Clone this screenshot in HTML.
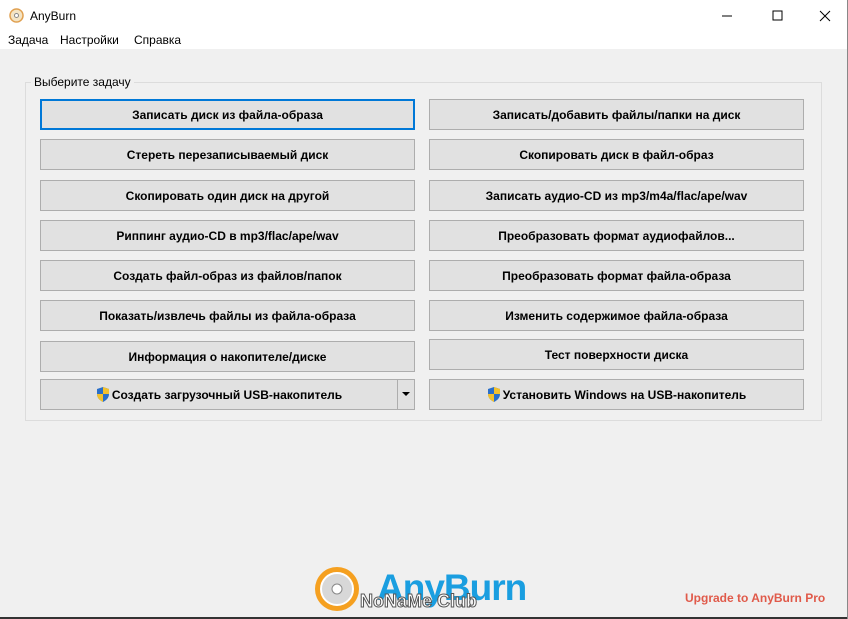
<!DOCTYPE html><html><head><meta charset="utf-8"><style>
*{margin:0;padding:0;box-sizing:border-box}
body{width:848px;height:619px;overflow:hidden;background:#f0f0f0;font-family:"Liberation Sans",sans-serif;position:relative}
.title{position:absolute;left:0;top:0;width:848px;height:31px;background:#fff;font-size:12px}
.menu{position:absolute;left:0;top:31px;width:848px;height:18px;background:#fff;font-size:12px}
.menu span{position:absolute;top:2px}
.grp{position:absolute;left:25px;top:82px;width:797px;height:339px;border:1px solid #dcdcdc}
.grp .lbl{position:absolute;left:5px;top:-8px;background:#f0f0f0;padding:0 3px;font-size:12px;color:#000}
.b{position:absolute;width:375px;height:31px;background:#e1e1e1;border:1px solid #adadad;font-size:12px;font-weight:bold;display:flex;align-items:center;justify-content:center;color:#000}
.sel{border:2px solid #0078d7}
.sh{width:14px;height:15px;margin-right:2px}
</style></head><body>
<div class="title">
<svg style="position:absolute;left:9px;top:8px" width="15" height="15"><circle cx="7.5" cy="7.5" r="6.5" fill="#f4e4c4" stroke="#e0a050" stroke-width="1.5"/><circle cx="7.5" cy="7.5" r="2" fill="#fff" stroke="#888"/></svg>
<span style="position:absolute;left:30px;top:9px">AnyBurn</span>
<svg style="position:absolute;left:722px;top:10px" width="110" height="12"><line x1="0" y1="6" x2="10" y2="6" stroke="#000"/><rect x="51" y="1" width="9" height="9" fill="none" stroke="#000"/><path d="M98 1L108 11M108 1L98 11" stroke="#000"/></svg>
</div>
<div class="menu"><span style="left:8px">Задача</span><span style="left:60px">Настройки</span><span style="left:134px">Справка</span></div>
<div class="grp"><span class="lbl">Выберите задачу</span></div>
<div class="b sel" style="left:40px;top:99px">Записать диск из файла-образа</div>
<div class="b" style="left:40px;top:139px">Стереть перезаписываемый диск</div>
<div class="b" style="left:40px;top:180px">Скопировать один диск на другой</div>
<div class="b" style="left:40px;top:220px">Риппинг аудио-CD в mp3/flac/ape/wav</div>
<div class="b" style="left:40px;top:260px">Создать файл-образ из файлов/папок</div>
<div class="b" style="left:40px;top:300px">Показать/извлечь файлы из файла-образа</div>
<div class="b" style="left:40px;top:341px">Информация о накопителе/диске</div>
<div class="b" style="left:40px;top:379px;width:358px"><svg class="sh" viewBox="0 0 14 15"><path d="M7 0L13 2V7C13 11 10 13.5 7 15C4 13.5 1 11 1 7V2Z" fill="#2a6fc9"/><path d="M7 0L13 2V7H7ZM7 7V15C4 13.5 1 11 1 7Z" fill="#f2c12e"/></svg>Создать загрузочный USB-накопитель</div>
<div class="b" style="left:397px;top:379px;width:18px"><svg width="8" height="5"><path d="M0 0H8L4 4Z" fill="#000"/></svg></div>
<div class="b" style="left:429px;top:99px">Записать/добавить файлы/папки на диск</div>
<div class="b" style="left:429px;top:139px">Скопировать диск в файл-образ</div>
<div class="b" style="left:429px;top:180px">Записать аудио-CD из mp3/m4a/flac/ape/wav</div>
<div class="b" style="left:429px;top:220px">Преобразовать формат аудиофайлов...</div>
<div class="b" style="left:429px;top:260px">Преобразовать формат файла-образа</div>
<div class="b" style="left:429px;top:300px">Изменить содержимое файла-образа</div>
<div class="b" style="left:429px;top:339px">Тест поверхности диска</div>
<div class="b" style="left:429px;top:379px"><svg class="sh" viewBox="0 0 14 15"><path d="M7 0L13 2V7C13 11 10 13.5 7 15C4 13.5 1 11 1 7V2Z" fill="#2a6fc9"/><path d="M7 0L13 2V7H7ZM7 7V15C4 13.5 1 11 1 7Z" fill="#f2c12e"/></svg>Установить Windows на USB-накопитель</div>
<svg style="position:absolute;left:314px;top:566px" width="46" height="46"><circle cx="23" cy="23" r="22" fill="#f5a020"/><circle cx="23" cy="23" r="16" fill="#d8d8d8" stroke="#fff" stroke-width="2"/><circle cx="23" cy="23" r="5" fill="#fff" stroke="#888"/></svg>
<div style="position:absolute;left:377px;top:567px;font-size:37px;font-weight:bold;color:#1a9ee0;letter-spacing:-1px">AnyBurn</div>
<div style="position:absolute;left:360px;top:591px;font-size:18px;color:#fff;-webkit-text-stroke:1px #555;font-weight:bold">NoNaMe Club</div>
<div style="position:absolute;left:685px;top:591px;font-size:12px;font-weight:bold;color:#e05a4a">Upgrade to AnyBurn Pro</div>
<div style="position:absolute;left:0;top:617px;width:848px;height:2px;background:#333"></div>
<div style="position:absolute;left:847px;top:0;width:1px;height:619px;background:#888"></div>
</body></html>
